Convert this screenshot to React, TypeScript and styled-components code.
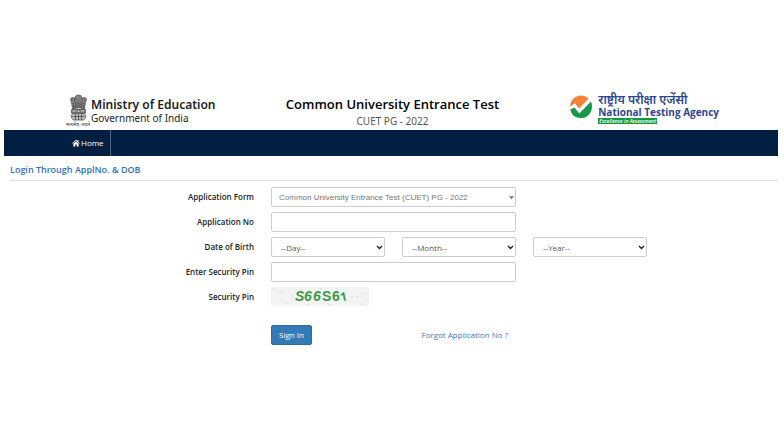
import React from "react";
import styled, { createGlobalStyle, css } from "styled-components";

const GlobalStyle = createGlobalStyle`
  *, *::before, *::after { box-sizing: border-box; }
  body {
    margin: 0;
    background: #fff;
    color: #333;
    font-family: "Open Sans", "Noto Sans", sans-serif;
    font-size: 8px;
    line-height: 12px;
  }
`;

const Page = styled.div`
  padding: 92px 0 60px;
`;

const Header = styled.header`
  display: grid;
  grid-template-columns: 1fr auto 1fr;
  align-items: start;
  height: 38px;
  padding: 0 65px 0 66px;
`;

const Ministry = styled.div`
  display: flex;
  align-items: flex-start;
  gap: 1px;
  color: #222;
`;

const MinistryText = styled.div`
  display: flex;
  flex-direction: column;
  padding-top: 5px;
  font-family: "Noto Sans", sans-serif;
  font-size: 10px;
  line-height: 10px;
  white-space: nowrap;
`;

const MinistryName = styled.strong`
  font-size: 12px;
  font-weight: 600;
  line-height: 16px;
`;

const Exam = styled.div`
  padding-top: 3px;
  text-align: center;
`;

const ExamTitle = styled.h1`
  margin: 0;
  color: #000;
  font-size: 13px;
  font-weight: 600;
  line-height: 18px;
`;

const ExamCode = styled.p`
  margin: 0;
  color: #555;
  font-family: "Noto Sans", sans-serif;
  font-size: 10px;
  line-height: 16px;
`;

const Agency = styled.div`
  display: flex;
  justify-content: flex-end;
  gap: 5px;
  padding-top: 2px;
  color: #2d4590;
`;

const AgencyText = styled.div`
  display: flex;
  flex-direction: column;
  align-items: flex-start;
  font-weight: 700;
  white-space: nowrap;
`;

const AgencyHindi = styled.span`
  font-family: "Noto Sans", "Noto Sans Devanagari", sans-serif;
  font-size: 12px;
  font-weight: 600;
  line-height: 12px;
`;

const AgencyName = styled.span`
  font-size: 10px;
  line-height: 12px;
`;

const Motto = styled.span`
  padding: 0 1px;
  background: #13983f;
  color: #fff;
  font-size: 5px;
  font-style: italic;
  font-weight: 600;
  line-height: 6px;
`;

const Nav = styled.nav`
  display: flex;
  height: 26px;
  margin: 0 6px 0 4px;
  padding-left: 62px;
  background: #001f42;
`;

const NavLink = styled.a`
  display: flex;
  align-items: center;
  gap: 1px;
  padding: 0 6px;
  border-right: 1px solid #52657c;
  color: #fff;
  text-decoration: none;
`;

const Heading = styled.h2`
  margin: 0 6px 6px 10px;
  padding: 6px 0 2px;
  border-bottom: 1px solid #ddd;
  color: #2f6fc0;
  font-size: 9px;
  font-weight: 600;
  line-height: 16px;
`;

const Form = styled.form`
  display: grid;
  grid-template-columns: repeat(6, 1fr);
  grid-auto-rows: minmax(20px, auto);
  gap: 5px 17px;
  padding: 0 6px 0 9px;
`;

const Label = styled.label`
  grid-column: 1 / span 2;
  align-self: center;
  text-align: right;
  color: #222;
  font-weight: 600;
`;

const control = css`
  width: 100%;
  height: 20px;
  border: 1px solid #ccc;
  border-radius: 2px;
  background: #fff;
  color: #555;
  font-family: inherit;
  font-size: 8px;
`;

const Input = styled.input`
  ${control}
  grid-column: span 2;
  padding: 0 8px;
`;

const SelectBox = styled.div<{ $span?: number }>`
  position: relative;
  grid-column: span ${(p) => p.$span ?? 1};
`;

const Select = styled.select`
  ${control}
  appearance: none;
  padding: 0 9px;
`;

const PickerSelect = styled(Select)`
  padding: 0 7px;
  color: #777;
  font-family: "Liberation Sans", Arial, sans-serif;
`;

const Arrow = styled.svg`
  position: absolute;
  top: 8px;
  right: 2px;
  pointer-events: none;
`;

const Captcha = styled.svg`
  grid-column: span 2;
`;

const Actions = styled.div`
  display: flex;
  grid-column: 3 / span 2;
  align-items: center;
  justify-content: space-between;
  padding-top: 13px;
`;

const SubmitButton = styled.button`
  height: 20px;
  padding: 0 7px;
  border: 1px solid #2e6da4;
  border-radius: 2px;
  background: #337ab7;
  color: #fff;
  font: inherit;
`;

const ForgotLink = styled.a`
  padding-right: 8px;
  color: #4379b8;
  text-decoration: none;
  white-space: nowrap;
`;

const Emblem = () => (
  <svg width="24" height="36" viewBox="0 0 24 36" role="img" aria-label="State Emblem of India">
    <g transform="translate(1.500 1)">
      <g fill="#888" stroke="#444" strokeWidth="0.7">
        <path d="M7.500 4.500Q8 2 11 2t3.500 2.500L15 9l-.5 6h-7L7 9z" />
        <path d="M7 5Q3.500 3.500 3 6.500L4 9l1 7h3L7.500 9z" />
        <path d="M15 5q3.500-1.500 4 1.500L18 9l-1 7h-3l.5-7z" />
        <path d="M4 16.500h14v3.500H4z" />
        <path d="M5 20.500Q2 24 6 27h10q4-3 1-6.500z" fill="#bbb" />
      </g>
      <g fill="none" stroke="#333" strokeWidth="0.6">
        <path d="M9 5.500h1M12 5.500h1M10 7.500q1 .8 2 0M8.500 9.500q2.500 2 5 0M9 11.500q2 1.500 4 0M9.500 12v3M12.500 12v3" />
        <path d="M3.500 7h2M5 10l1.500 1M6 12v3M18.500 7h-2M17 10l-1.500 1M16 12v3" />
        <circle cx="11" cy="18.300" r="1.400" fill="#ddd" />
        <path d="M5.500 19l1-1.200h2M13.500 18.800l1.200-1H16.500" stroke="#ddd" />
        <path d="M5 23.500h12M8 21v6M11 21v6M14 21v6" />
      </g>
    </g>
    <text x="12" y="34" textAnchor="middle" fontSize="5" fontFamily="Noto Sans, sans-serif" fill="#333">
      सत्यमेव जयते
    </text>
  </svg>
);

const AgencyMark = () => (
  <svg width="24" height="26" viewBox="0 0 24 26" aria-hidden="true">
    <path d="M1 12.500A11 11 0 0 1 19.500 4.500L10 14.500 6 9.200z" fill="#f58235" />
    <path d="M1.200 15.500L5.500 13.500l4.800 6L22 7.500Q24 12 22 17.500A11 11 0 0 1 1.200 15.500z" fill="#17984a" />
  </svg>
);

const HomeIcon = () => (
  <svg width="8" height="8" viewBox="0 0 16 16" fill="currentColor" aria-hidden="true">
    <path d="M8 1.500L.3 8.300l1 1.200L8 3.700l6.700 5.800 1-1.200-2.700-2.400V2h-2.200v2z" />
    <path d="M8 5L2.700 9.600V15h3.900v-4h2.800v4h3.900V9.600z" />
  </svg>
);

const Chevron = () => (
  <Arrow width="7" height="5" viewBox="0 0 7 5" aria-hidden="true">
    <path d="M1 1l2.500 2.500L6 1" fill="none" stroke="#222" strokeWidth="1.400" />
  </Arrow>
);

const captchaSpecks = [
  [3, 2], [10, 5], [15, 16], [22, 9], [31, 3], [38, 17], [50, 2], [58, 18],
  [66, 2], [75, 15], [81, 10], [86, 10], [90, 7], [95, 6], [91, 17], [94, 13],
];

const SecurityImage = () => (
  <Captcha id="captcha" width="98" height="19" viewBox="0 0 98 19" role="img" aria-label="Security pin image">
    <rect width="98" height="19" fill="#f3f3f3" />
    {captchaSpecks.map(([x, y]) => (
      <circle key={`${x}-${y}`} cx={x} cy={y} r="0.8" fill="#d2ddd2" />
    ))}
    <g fill="#3f9a48" fontFamily="Liberation Sans, Arial, sans-serif" fontSize="14" fontWeight="700">
      <text x="24 33 42" y="14" fontStyle="italic">S66</text>
      <text x="51 61" y="14">S6</text>
      <text x="69" y="14" fontFamily="Open Sans, sans-serif" fontSize="12" transform="rotate(-12 72 10)">1</text>
    </g>
  </Captcha>
);

export default function App() {
  return (
    <>
      <GlobalStyle />
      <Page>
        <Header>
          <Ministry>
            <Emblem />
            <MinistryText>
              <MinistryName>Ministry of Education</MinistryName>
              <span>Government of India</span>
            </MinistryText>
          </Ministry>
          <Exam>
            <ExamTitle>Common University Entrance Test</ExamTitle>
            <ExamCode>CUET PG - 2022</ExamCode>
          </Exam>
          <Agency>
            <AgencyMark />
            <AgencyText>
              <AgencyHindi lang="hi">राष्ट्रीय परीक्षा एजेंसी</AgencyHindi>
              <AgencyName>National Testing Agency</AgencyName>
              <Motto>Excellence in Assessment</Motto>
            </AgencyText>
          </Agency>
        </Header>
        <Nav>
          <NavLink href="#home">
            <HomeIcon />
            Home
          </NavLink>
        </Nav>
        <main>
          <Heading>Login Through ApplNo. &amp; DOB</Heading>
          <Form onSubmit={(event) => event.preventDefault()}>
            <Label htmlFor="form">Application Form</Label>
            <SelectBox $span={2}>
              <PickerSelect id="form">
                <option>Common University Entrance Test (CUET) PG - 2022</option>
              </PickerSelect>
              <Arrow width="5" height="5" viewBox="0 0 5 5" aria-hidden="true">
                <path d="M0 1h5L2.500 4.500z" fill="#888" />
              </Arrow>
            </SelectBox>

            <Label htmlFor="number">Application No</Label>
            <Input id="number" />

            <Label htmlFor="day">Date of Birth</Label>
            <SelectBox>
              <Select id="day">
                <option>--Day--</option>
              </Select>
              <Chevron />
            </SelectBox>
            <SelectBox>
              <Select aria-label="Month of birth">
                <option>--Month--</option>
              </Select>
              <Chevron />
            </SelectBox>
            <SelectBox>
              <Select aria-label="Year of birth">
                <option>--Year--</option>
              </Select>
              <Chevron />
            </SelectBox>

            <Label htmlFor="pin">Enter Security Pin</Label>
            <Input id="pin" />

            <Label as="span">Security Pin</Label>
            <SecurityImage />

            <Actions>
              <SubmitButton type="submit">Sign In</SubmitButton>
              <ForgotLink href="#forgot">Forgot Application No ?</ForgotLink>
            </Actions>
          </Form>
        </main>
      </Page>
    </>
  );
}
